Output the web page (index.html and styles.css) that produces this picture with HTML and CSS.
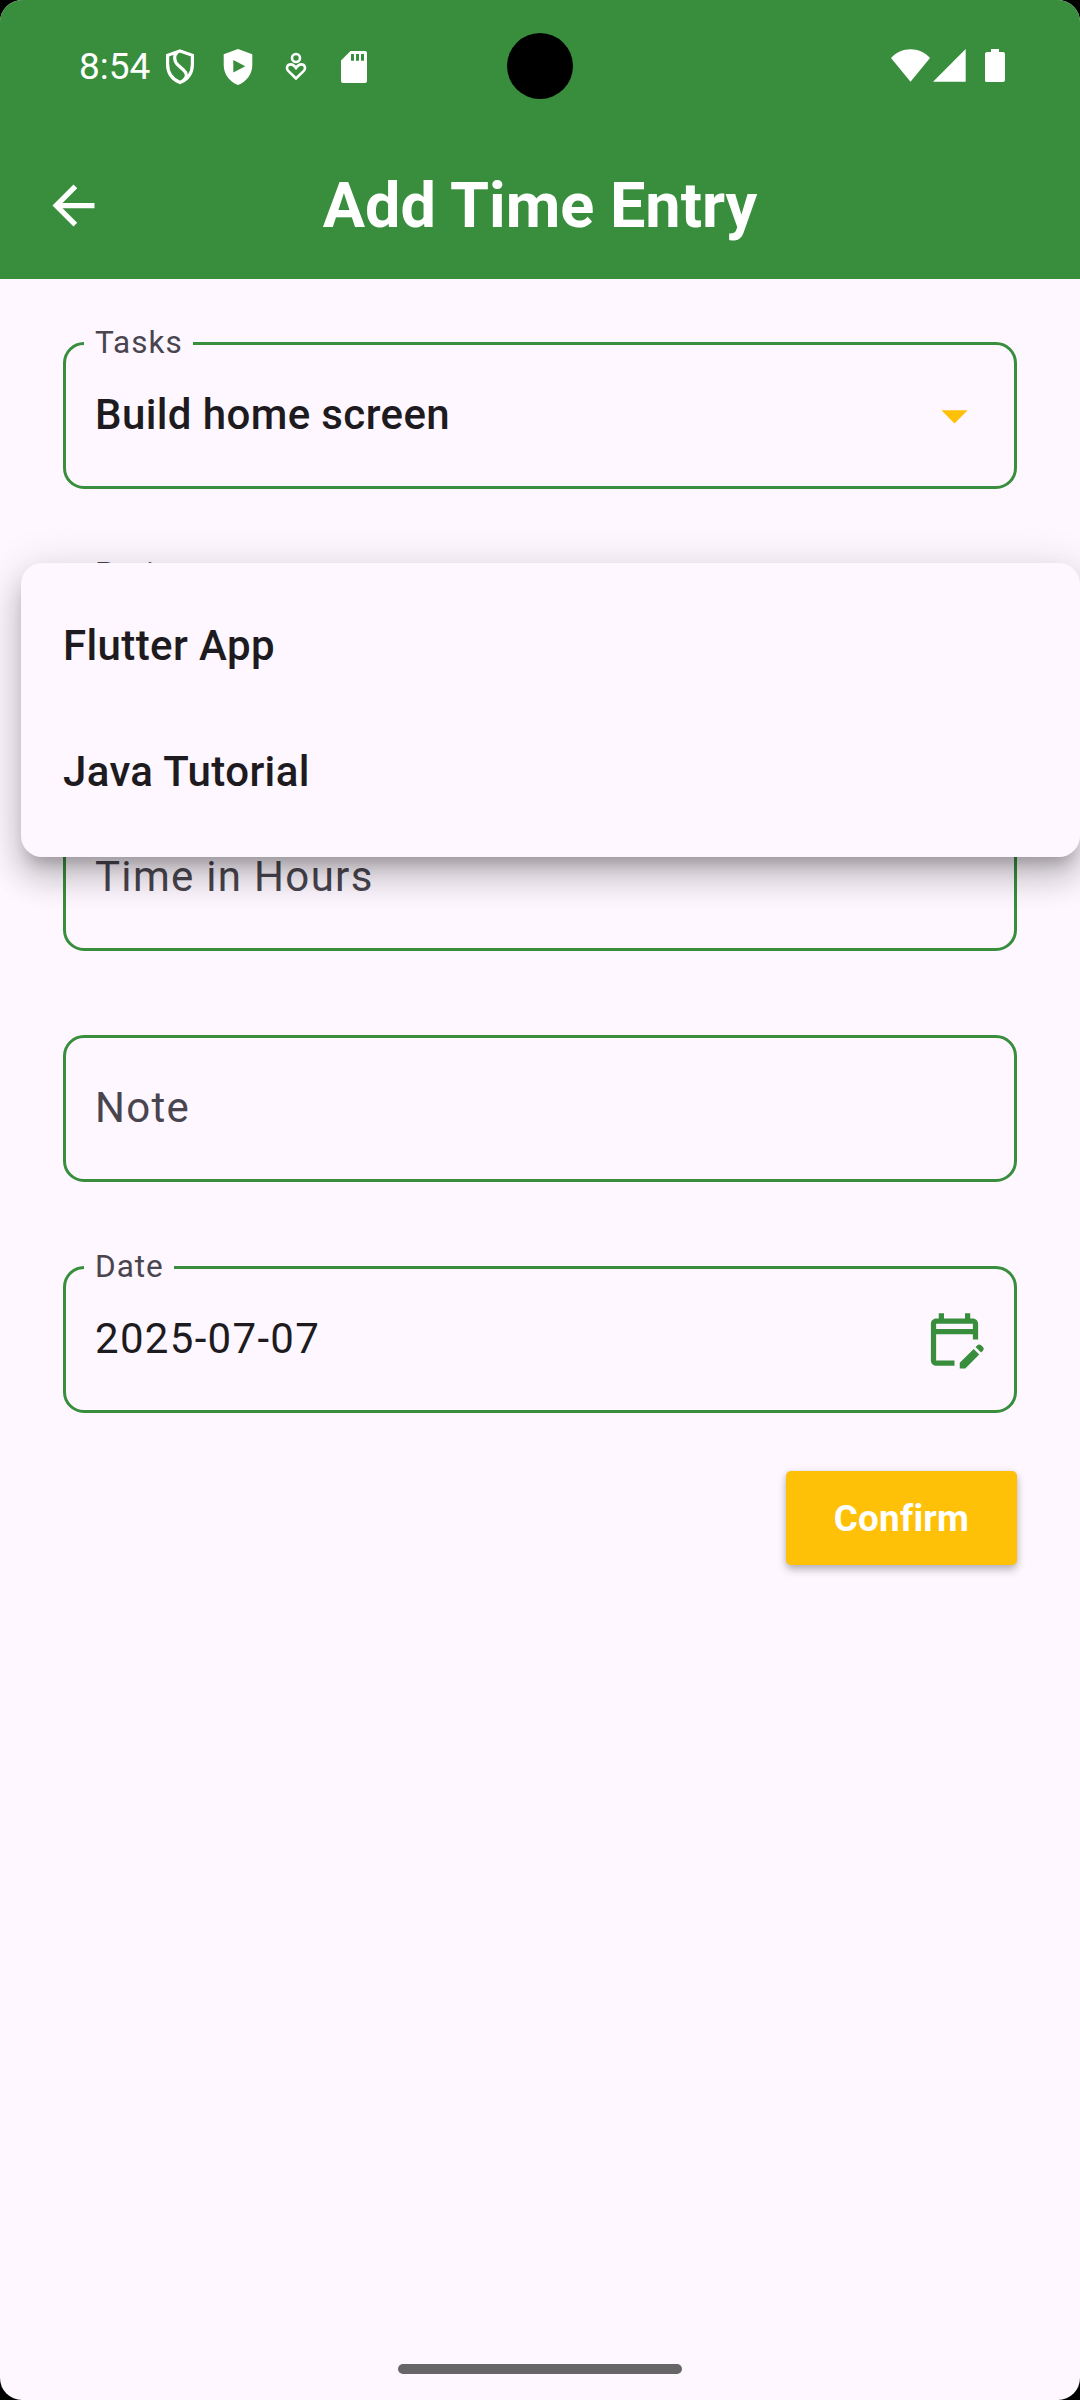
FILE: index.html
```html
<!DOCTYPE html>
<html lang="en">
<head>
<meta charset="utf-8">
<title>Add Time Entry</title>
<link rel="stylesheet" href="styles.css">
</head>
<body>
<div class="screen">
  <header class="top">
    <div class="status">
      <span class="clock">8:54</span>
      <div class="status-left">
        <svg width="30" height="36" viewBox="0 0 30 36" fill="none" stroke="#fff" stroke-width="3.2"><path d="M15 1.9L27.4 6.3V15C27.4 24 22.500 30.500 15 33.500C7.500 30.500 2.600 24 2.600 15V6.300Z"/><path d="M12.300 3C8.500 6.500 8.800 12.500 13.500 16.500L18.500 21C22.500 24.500 22.300 28 18.500 31.500"/></svg>
        <svg width="30" height="36" viewBox="0 0 30 36" fill="#fff" fill-rule="evenodd"><path d="M15 0L29.300 5.200V16C29.300 25.500 23 33 15 36C7 33 .7 25.500 .7 16V5.200ZM10.300 11V23.500L22.300 17.200Z"/></svg>
        <svg width="22" height="30" viewBox="0 0 22 30" fill="none" stroke="#fff" stroke-width="2.600"><circle cx="11" cy="6" r="4"/><path d="M11 26.500L3.500 19.200C.6 16.200 2.300 12.400 5.700 12.400C7.700 12.400 9.500 13.900 11 16C12.500 13.900 14.300 12.400 16.300 12.400C19.700 12.400 21.400 16.200 18.500 19.200Z"/></svg>
        <svg width="26" height="32" viewBox="0 0 26 32" fill="#fff" fill-rule="evenodd"><path d="M9.500 0H24Q26 0 26 2V30Q26 32 24 32H2Q0 32 0 30V9.500ZM10 3V9.700H13V3ZM15 3V9.700H18V3ZM20 3V9.700H23V3Z"/></svg>
      </div>
      <div class="status-right">
        <svg width="39" height="33" viewBox="0 0 39 33" fill="#fff"><path d="M0 9C5 3 12 .2 19.500 .2C27 .2 34 3 39 9L19.500 32.800Z"/></svg>
        <svg width="33" height="33" viewBox="0 0 33 33" fill="#fff"><path d="M0 32.700L32.700 0V32.700Z"/></svg>
        <svg class="battery" width="20" height="33" viewBox="0 0 20 33" fill="#fff"><path d="M6 0H14V3H18Q20 3 20 5V31Q20 33 18 33H1.500Q0 33 0 31.500V5Q0 3 2 3H6Z"/></svg>
      </div>
    </div>
    <div class="toolbar">
      <svg class="icon" viewBox="0 0 24 24" fill="#fff"><path d="M20 11H7.830l5.590-5.590L12 4l-8 8 8 8 1.410-1.410L7.830 13H20v-2z"/></svg>
      <h1>Add Time Entry</h1>
    </div>
  </header>

  <main class="form">
    <div class="field">
      <span class="label">Tasks</span>
      <span class="value strong">Build home screen</span>
      <svg class="icon amber" viewBox="0 0 24 24"><path d="M7 10l5 5 5-5z"/></svg>
    </div>
    <div class="field">
      <span class="label">Project</span>
    </div>
    <div class="field">
      <span class="value hint">Time in Hours</span>
    </div>
    <div class="field">
      <span class="value hint">Note</span>
    </div>
    <div class="field">
      <span class="label">Date</span>
      <span class="value">2025-07-07</span>
      <svg class="icon green" viewBox="0 0 24 24"><path fill-rule="evenodd" d="M5 10h14v2h2V6c0-1.100-.9-2-2-2h-1V2h-2v2H8V2H6v2H5C3.890 4 3.010 4.900 3.010 6L3 20c0 1.100.89 2 2 2h7v-2H5V10zM5 8V6h14v2H5z"/><path d="M22.840 16.280l-.71.71-2.120-2.120.71-.71c.39-.39 1.020-.39 1.410 0l.71.71c.39.39.39 1.020 0 1.410zM19.300 15.580l2.120 2.120-5.300 5.300H14v-2.120z"/></svg>
    </div>
    <button class="confirm">Confirm</button>
  </main>

  <ul class="menu">
    <li>Flutter App</li>
    <li>Java Tutorial</li>
  </ul>
  <div class="camera"></div>
  <div class="home-bar"></div>
</div>
</body>
</html>
```
FILE: styles.css
```css
* { box-sizing: border-box; }

body {
  margin: 0;
  background: #000;
  font-family: Roboto, "Liberation Sans", sans-serif;
  color: #1d1b20;
}

.screen {
  position: relative;
  display: flex;
  flex-direction: column;
  width: 1080px;
  height: 2400px;
  overflow: hidden;
  border-radius: 22px;
  background: #fef7ff;
}

.top {
  height: 279px;
  background: #388e3c;
  color: #fff;
}

.status {
  display: flex;
  align-items: center;
  height: 132px;
  padding: 0 75px 0 79px;
}

.clock {
  width: 86px;
  padding-top: 1px;
  font-size: 37px;
  line-height: 44px;
}

.status-left {
  display: flex;
  align-items: center;
  gap: 28px;
  padding-top: 2px;
}

.status-left svg:nth-child(3) { margin: 0 6px 0 4px; }

.status-right {
  display: flex;
  gap: 3px;
  margin-left: auto;
  padding-bottom: 1px;
}

.battery { margin-left: 16px; }

.toolbar {
  display: grid;
  grid-template-columns: 63px 1fr 63px;
  align-items: center;
  height: 147px;
  padding: 0 42px;
}

.icon {
  display: block;
  width: 63px;
  height: 63px;
}

.amber { fill: #ffc107; }
.green { fill: #388e3c; }

h1 {
  margin: 0;
  font-size: 63px;
  font-weight: 700;
  line-height: 80px;
  text-align: center;
}

.form {
  display: flex;
  flex-direction: column;
  gap: 84px;
  padding: 63px;
}

.field {
  position: relative;
  display: flex;
  align-items: center;
  justify-content: space-between;
  height: 147px;
  padding: 0 28px 0 29px;
  border: 3px solid #388e3c;
  border-radius: 21px;
}

.label {
  position: absolute;
  top: -21px;
  left: 18px;
  padding: 0 10px 0 11px;
  background: #fef7ff;
  color: #49454f;
  font-size: 31.5px;
  line-height: 37px;
  letter-spacing: 1px;
}

.value {
  padding-bottom: 2px;
  font-size: 42px;
  line-height: 63px;
  letter-spacing: 1.31px;
}

.strong {
  font-weight: 500;
  letter-spacing: 0.39px;
}

.hint { color: #49454f; }

.confirm {
  align-self: flex-end;
  width: 231px;
  height: 94px;
  margin-top: -26px;
  padding: 2px 0 0;
  border: 0;
  border-radius: 5px;
  background: #ffc107;
  color: #fff;
  font: 700 36.75px/52px Roboto, "Liberation Sans", sans-serif;
  letter-spacing: 0.26px;
  box-shadow: 0 5px 8px rgba(0, 0, 0, 0.24), 0 1px 6px rgba(0, 0, 0, 0.1);
}

.menu {
  position: absolute;
  top: 563px;
  left: 21px;
  width: 1059px;
  height: 294px;
  margin: 0;
  padding: 20px 42px 22px;
  list-style: none;
  border-radius: 21px;
  background: #fef7ff;
  box-shadow:
    0 13px 16px -8px rgba(0, 0, 0, 0.23),
    0 21px 31px 3px rgba(0, 0, 0, 0.15),
    0 8px 43px 5px rgba(0, 0, 0, 0.12);
}

.menu li {
  font-size: 42px;
  font-weight: 500;
  line-height: 126px;
  letter-spacing: 0.39px;
}

.camera {
  position: absolute;
  top: 33px;
  left: 507px;
  width: 66px;
  height: 66px;
  border-radius: 50%;
  background: #000;
}

.home-bar {
  position: absolute;
  left: 398px;
  bottom: 26px;
  width: 284px;
  height: 10px;
  border-radius: 5px;
  background: #676568;
}
```
